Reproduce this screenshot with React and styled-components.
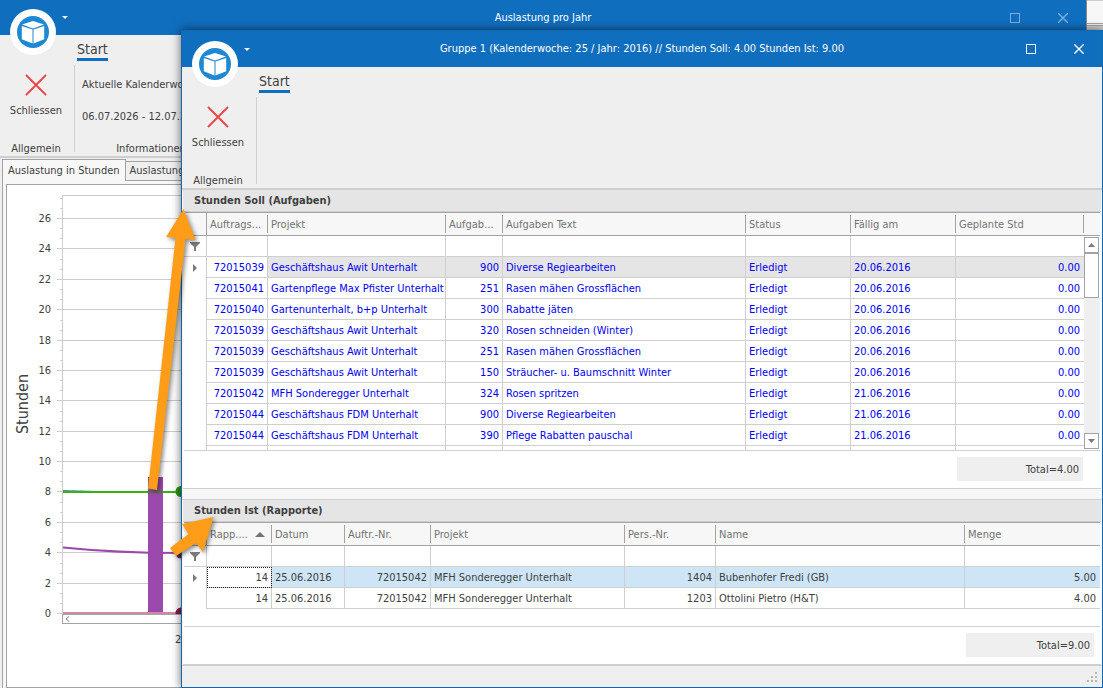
import React from "react";
import styled, { createGlobalStyle } from "styled-components";

const tasks = [
  ["72015039", "Geschäftshaus Awit Unterhalt", "900", "Diverse Regiearbeiten", "Erledigt", "20.06.2016", "0.00"],
  ["72015041", "Gartenpflege Max Pfister Unterhalt", "251", "Rasen mähen Grossflächen", "Erledigt", "20.06.2016", "0.00"],
  ["72015040", "Gartenunterhalt, b+p Unterhalt", "300", "Rabatte jäten", "Erledigt", "20.06.2016", "0.00"],
  ["72015039", "Geschäftshaus Awit Unterhalt", "320", "Rosen schneiden (Winter)", "Erledigt", "20.06.2016", "0.00"],
  ["72015039", "Geschäftshaus Awit Unterhalt", "251", "Rasen mähen Grossflächen", "Erledigt", "20.06.2016", "0.00"],
  ["72015039", "Geschäftshaus Awit Unterhalt", "150", "Sträucher- u. Baumschnitt Winter", "Erledigt", "20.06.2016", "0.00"],
  ["72015042", "MFH Sonderegger Unterhalt", "324", "Rosen spritzen", "Erledigt", "21.06.2016", "0.00"],
  ["72015044", "Geschäftshaus FDM Unterhalt", "900", "Diverse Regiearbeiten", "Erledigt", "21.06.2016", "0.00"],
  ["72015044", "Geschäftshaus FDM Unterhalt", "390", "Pflege Rabatten pauschal", "Erledigt", "21.06.2016", "0.00"],
  ["", "", "", "", "", "", ""],
];

const taskColumns = [
  { label: "Auftrags...", width: 61, right: true },
  { label: "Projekt", width: 178 },
  { label: "Aufgab...", width: 57, right: true },
  { label: "Aufgaben Text" },
  { label: "Status", width: 105 },
  { label: "Fällig am", width: 105 },
  { label: "Geplante Std", width: 128, right: true, closed: true },
];

const reports = [
  ["14", "25.06.2016", "72015042", "MFH Sonderegger Unterhalt", "1404", "Bubenhofer Fredi (GB)", "5.00"],
  ["14", "25.06.2016", "72015042", "MFH Sonderegger Unterhalt", "1203", "Ottolini Pietro (H&T)", "4.00"],
];

const reportColumns = [
  { label: "Rapp....", width: 65, right: true, sorted: true },
  { label: "Datum", width: 73 },
  { label: "Auftr.-Nr.", width: 86, right: true },
  { label: "Projekt", width: 194 },
  { label: "Pers.-Nr.", width: 91, right: true },
  { label: "Name" },
  { label: "Menge", width: 135, right: true },
];

const LogoIcon = () => (
  <svg width="32" height="32" viewBox="0 0 32 32" aria-hidden="true">
    <circle cx="16" cy="16" r="16" fill="#1e88d2" />
    <path d="M16 5 27 8.600 16 12.400 5 8.600Z" fill="#fff" />
    <path d="M4.800 10 15.500 13.600V27.400L4.800 23.200Z" fill="#fff" />
    <path d="M27.200 10 16.500 13.600V27.400L27.200 23.200Z" fill="#fff" />
  </svg>
);

const CloseRed = () => (
  <svg width="22" height="22" viewBox="0 0 22 22" aria-hidden="true">
    <path d="M1 1 21 21M21 1 1 21" stroke="#ee4343" strokeWidth="1.8" fill="none" />
  </svg>
);

const Funnel = () => (
  <svg width="10" height="9" viewBox="0 0 10 9" aria-hidden="true">
    <path d="M0 0H10V1L6 5V9H4V5L0 1Z" fill="#7b7b7b" />
  </svg>
);

const RowMarker = () => (
  <svg width="4" height="8" viewBox="0 0 4 8" aria-hidden="true">
    <path d="M0 0 4 4 0 8Z" fill="#7b7b7b" />
  </svg>
);

const Triangle = ({ down, width = 7, height = 4 }) => (
  <svg width={width} height={height} viewBox="0 0 8 4" preserveAspectRatio="none" aria-hidden="true">
    <path d={down ? "M0 0H8L4 4Z" : "M0 4H8L4 0Z"} fill="currentColor" />
  </svg>
);

const WindowBar = ({ title, height, inactive }) => (
  <TitleBar $height={height}>
    <Logo aria-label="Menu">
      <LogoIcon />
    </Logo>
    <QuickMenu aria-label="Quick access">
      <Triangle down width={6} height={3} />
    </QuickMenu>
    <Title>{title}</Title>
    <WindowButtons $inactive={inactive}>
      <WindowButton aria-label="Maximize">
        <svg width="10" height="10" viewBox="0 0 10 10">
          <rect x="0.5" y="0.5" width="9" height="9" fill="none" stroke="currentColor" />
        </svg>
      </WindowButton>
      <WindowButton aria-label="Close">
        <svg width="10" height="10" viewBox="0 0 10 10">
          <path d="M0 0 10 10M10 0 0 10" stroke="currentColor" strokeWidth="1.4" />
        </svg>
      </WindowButton>
    </WindowButtons>
  </TitleBar>
);

const Ribbon = ({ children }) => (
  <RibbonBox>
    <RibbonTabs>
      <RibbonTab>Start</RibbonTab>
    </RibbonTabs>
    <RibbonGroups>
      <RibbonGroup>
        <RibbonButton>
          <CloseRed />
          Schliessen
        </RibbonButton>
        <GroupLabel>Allgemein</GroupLabel>
      </RibbonGroup>
      {children}
    </RibbonGroups>
  </RibbonBox>
);

const DataGrid = ({ name, columns, rows, link, selected, dotted }) => (
  <Table>
    <colgroup>
      <Col $width={23} />
      {columns.map((c) => (
        <Col key={c.label} $width={c.width} />
      ))}
    </colgroup>
    <thead>
      <tr>
        <CornerTh aria-label="Row" />
        {columns.map((c, i) => (
          <Th key={c.label} scope="col">
            <HeadCell $line={c.closed || i < columns.length - 1}>
              {c.label}
              {c.sorted && <Triangle width={10} height={5} />}
            </HeadCell>
          </Th>
        ))}
      </tr>
    </thead>
    <tbody>
      <tr>
        <MarkTd $line>
          <Funnel />
        </MarkTd>
        {columns.map((c) => (
          <Td key={c.label}>
            <FilterInput aria-label={`${name} ${c.label}`} />
          </Td>
        ))}
      </tr>
      {rows.map((row, i) => (
        <tr key={i}>
          <MarkTd>{i === 0 && <RowMarker />}</MarkTd>
          {row.map((cell, j) => (
            <Td
              key={j}
              $right={columns[j].right}
              $link={link}
              $bg={i === 0 && j > 0 ? selected : undefined}
              $focus={dotted && i === 0 && j === 0}
            >
              {cell}
            </Td>
          ))}
        </tr>
      ))}
    </tbody>
  </Table>
);

// value -> y inside the chart drawing
const yOf = (v) => 428 - v * 15.19;

const Chart = () => (
  <ChartSvg viewBox="0 0 260 480" width="260" height="480" role="img" aria-label="Stunden">
    <path d="M55.5 10V439" stroke="#cdcdcd" />
    <path d="M55 10.5H260" stroke="#cdcdcd" />
    {Array.from({ length: 14 }, (_, i) => i * 2).map((v) => {
      const y = Math.round(yOf(v)) + 0.5;
      return (
        <g key={v}>
          <path d={`M50 ${y}H260`} stroke="#cdcdcd" />
          <path d={`M53 ${y - 10}H55M53 ${y - 20}H55`} stroke="#cdcdcd" />
          <text x="44" y={y + 3.5} textAnchor="end" fontSize="11" fill="#404040">
            {v}
          </text>
        </g>
      );
    })}
    <text transform="translate(21 219) rotate(-90)" textAnchor="middle" fontSize="16" fill="#404040">
      Stunden
    </text>
    <path d="M56 305.5C80 306 95 307 120 307" stroke="#4a86c5" fill="none" />
    <path d="M56 362.5C90 366 120 368 175 368" stroke="#9c49ad" strokeWidth="2" fill="none" />
    <rect x="141" y="292" width="15" height="136" fill="#9c49ad" />
    <path d="M56 307H175" stroke="#38b20c" strokeWidth="2" />
    <path d="M141 307H156" stroke="#5a7a3a" strokeWidth="2" />
    <path d="M56 428H175" stroke="#d08aa8" strokeWidth="2" />
    <circle cx="174" cy="306.5" r="5.5" fill="#2f9412" />
    <circle cx="174" cy="368" r="5.5" fill="#71317e" />
    <circle cx="174" cy="428" r="5.5" fill="#8f1848" />
    <rect x="55.5" y="429.5" width="230" height="9" fill="#fff" stroke="#a3a3a3" />
    <path d="M62 431.500 59 434 62 436.500" stroke="#7b7b7b" fill="none" />
    <text x="168" y="458" fontSize="11" fill="#404040">
      25
    </text>
  </ChartSvg>
);

const Arrows = () => (
  <ArrowLayer width="240" height="600" viewBox="0 0 240 600" aria-hidden="true">
    <path d="M183.500 209 195.500 240 185.500 239 157 490 148 488.500 175.500 238 166 237Z" fill="#ff9d19" />
    <path d="M213.500 517 203 552 196 543 176 556 170 548 188.500 534 182 524Z" fill="#ff9d19" />
  </ArrowLayer>
);

const App = () => {
  return (
    <Desktop>
      <Global />
      <BackWindow>
        <WindowBar title="Auslastung pro Jahr" height={35} inactive />
        <Ribbon>
          <InfoGroup>
            <InfoLine>Aktuelle Kalenderwoche</InfoLine>
            <InfoLine>06.07.2026 - 12.07.2026</InfoLine>
            <GroupLabel>Informationen</GroupLabel>
          </InfoGroup>
        </Ribbon>
        <PageTabs role="tablist">
          <PageTab role="tab" aria-selected="true" $active>
            Auslastung in Stunden
          </PageTab>
          <PageTab role="tab" aria-selected="false">
            Auslastung
          </PageTab>
        </PageTabs>
        <PageBody>
          <ChartPanel>
            <Chart />
          </ChartPanel>
        </PageBody>
      </BackWindow>
      <Backdrop />
      <Dialog>
        <WindowBar
          title="Gruppe 1 (Kalenderwoche: 25 / Jahr: 2016) // Stunden Soll: 4.00 Stunden Ist: 9.00"
          height={36}
        />
        <Ribbon />
        <Section $grow>
          <SectionTitle>Stunden Soll (Aufgaben)</SectionTitle>
          <GridArea $grow>
            <DataGrid name="Aufgaben" columns={taskColumns} rows={tasks} link selected="#e5e5e5" />
            <ScrollColumn>
              <ScrollHead />
              <ScrollButton aria-label="Up">
                <Triangle />
              </ScrollButton>
              <ScrollThumb />
              <ScrollTrack />
              <ScrollButton aria-label="Down">
                <Triangle down />
              </ScrollButton>
            </ScrollColumn>
          </GridArea>
          <Footer $end={18}>
            <Total $width={126}>Total=4.00</Total>
          </Footer>
        </Section>
        <Splitter />
        <Section>
          <SectionTitle>Stunden Ist (Rapporte)</SectionTitle>
          <GridArea>
            <DataGrid name="Rapporte" columns={reportColumns} rows={reports} selected="#cde5f7" dotted />
          </GridArea>
          <Footer $end={7}>
            <Total $width={128}>Total=9.00</Total>
          </Footer>
        </Section>
        <StatusBar>
          <svg width="10" height="10" viewBox="0 0 10 10" aria-hidden="true">
            <path d="M8 0h2v2h-2zM4 4h2v2h-2zM8 4h2v2h-2zM0 8h2v2h-2zM4 8h2v2h-2zM8 8h2v2h-2z" fill="#b5b5b5" />
          </svg>
        </StatusBar>
      </Dialog>
      <Arrows />
    </Desktop>
  );
};

export default App;

const Global = createGlobalStyle`
  * {
    box-sizing: border-box;
  }
  body {
    margin: 0;
    font-family: "DejaVu Sans Condensed", "Noto Sans", sans-serif;
    font-size: 11px;
    line-height: 14px;
    color: #404040;
  }
  button, input {
    font: inherit;
    color: inherit;
    border: 0;
    padding: 0;
    background: none;
  }
  svg {
    display: block;
    flex: none;
  }
`;
const Desktop = styled.div`
  position: relative;
  height: 100vh;
  overflow: hidden;
  background-color: #f7f7f7;
`;
const BackWindow = styled.div`
  display: flex;
  flex-direction: column;
  height: 100%;
  margin-right: 16px;
  background-color: #efefef;
  border-right: 1px solid #8a8a8a;
`;
const Backdrop = styled.div`
  position: absolute;
  top: 0;
  right: 0;
  width: 16px;
  height: 30px;
  border-top: 1px solid #cdcdcd;
  background: linear-gradient(#f7f7f7 22px, #a3a3a3 22px, #a3a3a3 23px, #f0f0f0 23px, #f0f0f0 24px, #a3a3a3 24px, #a3a3a3 25px, #d0d0d0 25px);
`;
const Dialog = styled.div`
  position: absolute;
  top: 30px;
  left: 181px;
  right: 0;
  bottom: 0;
  display: flex;
  flex-direction: column;
  background-color: #f7f7f7;
  border: 1px solid #1068b2;
  box-shadow: 0 0 9px rgba(0, 0, 0, 0.6);
`;
const TitleBar = styled.div`
  position: relative;
  display: flex;
  align-items: center;
  flex: none;
  height: ${({ $height }) => $height}px;
  background-color: #106ebe;
  color: white;
`;
const Logo = styled.button`
  position: absolute;
  left: 10px;
  bottom: -20px;
  width: 46px;
  height: 46px;
  display: flex;
  align-items: center;
  justify-content: center;
  border-radius: 50%;
  background-color: white;
`;
const QuickMenu = styled.button`
  position: absolute;
  left: 58px;
  width: 14px;
  height: 20px;
  display: flex;
  align-items: center;
  justify-content: center;
`;
const Title = styled.div`
  flex: 1;
  padding-left: 94px;
  text-align: center;
`;
const WindowButtons = styled.div`
  display: flex;
  gap: 2px;
  opacity: ${({ $inactive }) => ($inactive ? 0.45 : 1)};
`;
const WindowButton = styled.button`
  width: 46px;
  height: 30px;
  display: flex;
  align-items: center;
  justify-content: center;
`;
const RibbonBox = styled.div`
  flex: none;
  background-color: #efefef;
  border-bottom: 2px solid #cfcfcf;
`;
const RibbonTabs = styled.div`
  display: flex;
  padding: 5px 0 0 77px;
`;
const RibbonTab = styled.button`
  height: 21px;
  font-size: 14px;
  line-height: 18px;
  border-bottom: 3px solid #106ebe;
`;
const RibbonGroups = styled.div`
  display: flex;
  height: 95px;
  padding: 4px 0;
`;
const RibbonGroup = styled.div`
  display: flex;
  flex-direction: column;
  align-items: center;
  width: 75px;
  padding: 9px 2px 0 0;
  border-right: 1px solid #cfcfcf;
`;
const RibbonButton = styled.button`
  display: flex;
  flex-direction: column;
  align-items: center;
  gap: 8px;
`;
const GroupLabel = styled.div`
  margin-top: auto;
  margin-bottom: -4px;
`;
const InfoGroup = styled.div`
  display: flex;
  flex-direction: column;
  align-items: center;
  width: 145px;
  padding: 13px 0 0 7px;
`;
const InfoLine = styled.div`
  width: 100%;
  height: 32px;
  white-space: nowrap;
`;
const PageTabs = styled.div`
  display: flex;
  align-items: flex-start;
  flex: none;
  padding: 1px 0 0 2px;
`;
const PageTab = styled.button`
  height: ${({ $active }) => ($active ? 22 : 20)}px;
  padding: 0 ${({ $active }) => ($active ? 5 : 4)}px;
  margin-top: ${({ $active }) => ($active ? 0 : 2)}px;
  border: 1px solid #a3a3a3;
  border-bottom-width: ${({ $active }) => ($active ? 0 : 1)}px;
  border-left-width: ${({ $active }) => ($active ? 1 : 0)}px;
  background-color: ${({ $active }) => ($active ? "#f7f7f7" : "#efefef")};
  white-space: nowrap;
`;
const PageBody = styled.div`
  flex: 1;
  min-height: 0;
  margin-left: 2px;
  padding: 3px 3px 0;
  background-color: #f7f7f7;
  border-left: 1px solid #a3a3a3;
`;
const ChartPanel = styled.div`
  height: 100%;
  background-color: white;
  border: 1px solid #a3a3a3;
  overflow: hidden;
`;
const ChartSvg = styled.svg`
  display: block;
`;
const ArrowLayer = styled.svg`
  position: absolute;
  top: 0;
  left: 0;
  pointer-events: none;
  filter: drop-shadow(2px 2px 2px rgba(0, 0, 0, 0.45));
`;
const Section = styled.div`
  display: flex;
  flex-direction: column;
  flex: ${({ $grow }) => ($grow ? "1 1 0" : "none")};
  min-height: 0;
  margin: 0 1px;
  background-color: white;
  border-bottom: 1px solid #cfcfcf;
`;
const SectionTitle = styled.h2`
  flex: none;
  height: 22px;
  margin: 0;
  padding-left: 11px;
  font-size: 11px;
  line-height: 22px;
  background-color: #e5e5e5;
  border-bottom: 1px solid #cfcfcf;
`;
const GridArea = styled.div`
  display: flex;
  align-items: flex-start;
  flex: ${({ $grow }) => ($grow ? "1 1 0" : "none")};
  min-height: ${({ $grow }) => ($grow ? 0 : 105)}px;
  margin: 0 1px;
  overflow: hidden;
  border-top: 1px solid #a3a3a3;
  border-bottom: 1px solid #cfcfcf;
`;
const Table = styled.table`
  flex: 1;
  min-width: 0;
  width: 100%;
  table-layout: fixed;
  border-collapse: separate;
  border-spacing: 0;
`;
const Col = styled.col`
  width: ${({ $width }) => ($width ? `${$width}px` : "auto")};
`;
const Th = styled.th`
  height: 23px;
  padding: 2px 0;
  font-weight: 400;
  text-align: left;
  color: #737373;
  background-color: #f7f7f7;
  border-bottom: 1px solid #a3a3a3;
`;
const CornerTh = styled(Th)`
  border-right: 1px solid #a3a3a3;
`;
const HeadCell = styled.div`
  display: flex;
  align-items: center;
  justify-content: space-between;
  height: 18px;
  padding: 1px 6px 0 3px;
  white-space: nowrap;
  border-right: ${({ $line }) => ($line ? "1px solid #a3a3a3" : "0")};
`;
const Td = styled.td`
  height: 21px;
  padding: 1px 3px 0;
  overflow: hidden;
  white-space: nowrap;
  text-align: ${({ $right }) => ($right ? "right" : "left")};
  color: ${({ $link }) => ($link ? "#0000f5" : "#404040")};
  background-color: ${({ $bg }) => $bg || "white"};
  border-right: 1px solid #cfcfcf;
  border-bottom: 1px solid #cfcfcf;
  outline: ${({ $focus }) => ($focus ? "1px dotted #202020" : "0")};
  outline-offset: -1px;

  &:last-child {
    padding-right: 4px;
    border-right: 0;
  }
`;
const MarkTd = styled.td`
  padding: 0 0 0 6px;
  border-right: 1px solid #cfcfcf;
  border-bottom: ${({ $line }) => ($line ? "1px solid #cfcfcf" : "0")};

  svg {
    margin-left: ${({ $line }) => ($line ? 0 : 3)}px;
  }
`;
const FilterInput = styled.input`
  display: block;
  width: 100%;
  height: 16px;
`;
const ScrollColumn = styled.div`
  display: flex;
  flex-direction: column;
  align-self: stretch;
  flex: none;
  width: 16px;
  padding-bottom: 1px;
`;
const ScrollHead = styled.div`
  flex: none;
  height: 23px;
  margin-bottom: 1px;
  background-color: #f7f7f7;
  border-bottom: 1px solid #a3a3a3;
`;
const ScrollButton = styled.button`
  display: flex;
  align-items: center;
  justify-content: center;
  flex: none;
  width: 15px;
  height: 16px;
  color: #7b7b7b;
  background-color: white;
  border: 1px solid #a3a3a3;
`;
const ScrollThumb = styled.div`
  flex: none;
  width: 15px;
  height: 45px;
  background-color: white;
  border: 1px solid #a3a3a3;
`;
const ScrollTrack = styled.div`
  flex: 1;
  background-color: #efefef;
`;
const Footer = styled.div`
  display: flex;
  justify-content: flex-end;
  flex: none;
  height: 37px;
  padding: 6px ${({ $end }) => $end}px 0 0;
`;
const Total = styled.div`
  width: ${({ $width }) => $width}px;
  height: 24px;
  padding-right: 4px;
  line-height: 25px;
  text-align: right;
  background-color: #efefef;
`;
const Splitter = styled.div`
  flex: none;
  height: 11px;
  border-bottom: 1px solid #cfcfcf;
`;
const StatusBar = styled.div`
  display: flex;
  align-items: flex-end;
  justify-content: flex-end;
  flex: none;
  height: 22px;
  padding: 0 5px 5px;
  background-color: #efefef;
  border-top: 1px solid #cfcfcf;
`;
